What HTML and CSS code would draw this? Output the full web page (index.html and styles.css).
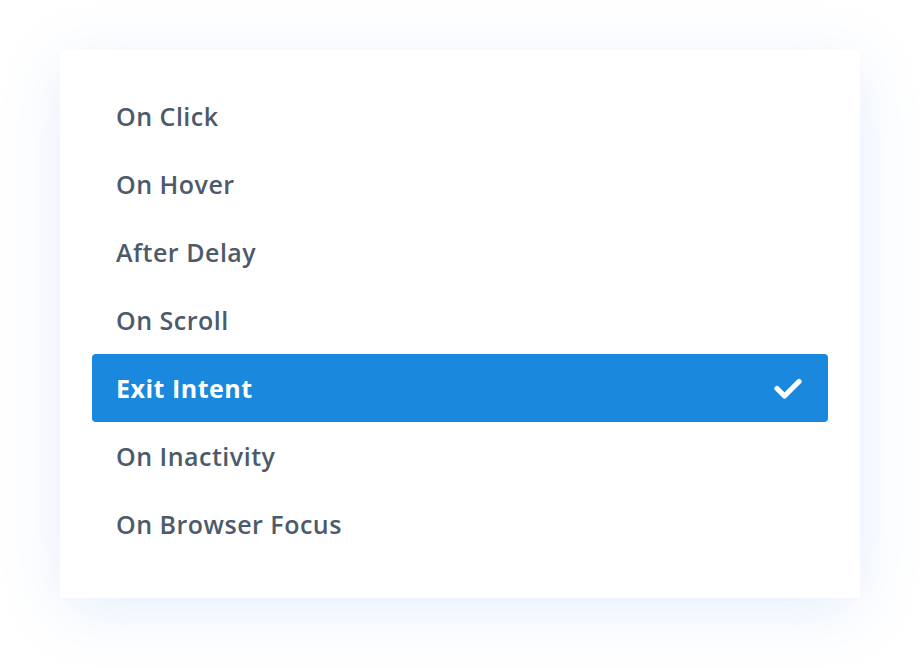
FILE: index.html
```html
<!DOCTYPE html>
<html>
<head>
<meta charset="utf-8">
<link rel="stylesheet" href="styles.css">
</head>
<body>
<div class="card">
  <ul class="list">
    <li class="item">On Click</li>
    <li class="item">On Hover</li>
    <li class="item">After Delay</li>
    <li class="item">On Scroll</li>
    <li class="item selected"><span>Exit Intent</span>
      <svg class="check" width="28" height="22" viewBox="0 0 28 22"><path d="M3 11.5 L10.5 19 L25 4.5" fill="none" stroke="#fff" stroke-width="5.2" stroke-linecap="round" stroke-linejoin="round"/></svg>
    </li>
    <li class="item">On Inactivity</li>
    <li class="item">On Browser Focus</li>
  </ul>
</div>
</body>
</html>
```

FILE: styles.css
```css
html, body {
  margin: 0;
  padding: 0;
  background: #fff;
}
body {
  width: 920px;
  height: 668px;
  padding-top: 50px;
  box-sizing: border-box;
  font-family: "Open Sans", sans-serif;
}
.card {
  margin-left: 60px;
  width: 800px;
  height: 548px;
  box-sizing: border-box;
  background: #fff;
  padding: 32px 32px 40px;
  box-shadow: 0 12px 60px rgba(43, 120, 228, 0.12);
}
.list {
  list-style: none;
  margin: 0;
  padding: 0;
}
.item {
  height: 68px;
  display: flex;
  align-items: center;
  justify-content: space-between;
  padding: 0 26px 0 24px;
  font-size: 25px;
  font-weight: 600;
  letter-spacing: 0.5px;
  color: #4c5a6b;
  border-radius: 4px;
}
.item.selected {
  background: #1a88dd;
  color: #fff;
  font-weight: 700;
}
.check {
  display: block;
}
```
